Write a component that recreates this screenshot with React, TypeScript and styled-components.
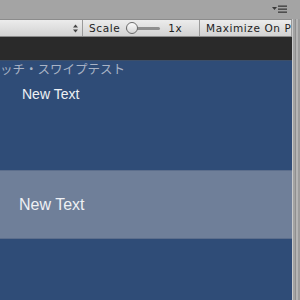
import React from "react";
import styled, { createGlobalStyle } from "styled-components";

const Global = createGlobalStyle`
  html, body { margin: 0; padding: 0; }
  body { width: 300px; height: 300px; overflow: hidden; background: #a3a3a3; }
`;

const Frame = styled.div`
  width: 300px;
  height: 300px;
  display: flex;
  flex-direction: column;
  overflow: hidden;
`;

const TabBar = styled.div`
  height: 19px;
  background: #a4a4a4;
  display: flex;
  justify-content: flex-end;
  align-items: flex-start;
  padding: 5px 12px 0 0;
  box-sizing: border-box;
`;

const Body = styled.div`
  flex: 1;
  display: flex;
  min-height: 0;
`;

const Main = styled.div`
  flex: 1;
  display: flex;
  flex-direction: column;
  min-width: 0;
`;

const Toolbar = styled.div`
  height: 18px;
  display: flex;
  align-items: stretch;
  background: linear-gradient(#ececec, #d2d2d2);
  border-top: 1px solid #8c8c8c;
  border-bottom: 1px solid #8a8a8a;
  box-sizing: border-box;
  font-family: "DejaVu Sans", sans-serif;
  font-size: 10.5px;
  color: #1e1e1e;
  white-space: nowrap;
  overflow: hidden;
`;

const Dropdown = styled.div`
  width: 83px;
  flex: none;
  display: flex;
  justify-content: flex-end;
  align-items: center;
  padding-right: 4px;
  box-sizing: border-box;
  border-right: 1px solid #9a9a9a;
`;

const Section = styled.div<{ $w?: number }>`
  display: flex;
  align-items: center;
  gap: 6px;
  padding-left: 6px;
  box-sizing: border-box;
  ${(p) => (p.$w ? `width: ${p.$w}px; flex: none;` : "flex: 1;")}
  border-right: 1px solid #9a9a9a;
  overflow: hidden;
  letter-spacing: 0.6px;
`;

const Slider = styled.div`
  position: relative;
  width: 34px;
  height: 12px;
  display: flex;
  align-items: center;
`;

const Track = styled.div`
  width: 100%;
  height: 3px;
  border-radius: 2px;
  background: #8e8e8e;
`;

const Knob = styled.div`
  position: absolute;
  left: 0;
  top: 0;
  width: 10px;
  height: 10px;
  border-radius: 50%;
  border: 1px solid #6c6c6c;
  background: linear-gradient(#fafafa, #d6d6d6);
`;

const Ratio = styled.span`
  margin-left: 2px;
`;

const DarkStrip = styled.div`
  height: 23px;
  background: #2a2a2a;
  border-bottom: 1px solid #3c4e68;
`;

const Game = styled.div`
  flex: 1;
  background: #2f4c77;
  display: flex;
  flex-direction: column;
  overflow: hidden;
`;

const Title = styled.div`
  font-family: "Noto Sans CJK JP", sans-serif;
  font-size: 12.5px;
  line-height: 15px;
  color: #a9b3c5;
  margin-left: -12.5px;
  white-space: nowrap;
`;

const Row = styled.div<{ $highlight?: boolean; $h: number; $pad?: number; $size?: number }>`
  height: ${(p) => p.$h}px;
  flex: none;
  box-sizing: border-box;
  display: flex;
  align-items: center;
  padding-left: ${(p) => p.$pad ?? 0}px;
  font-family: "Liberation Sans", Arial, sans-serif;
  font-size: ${(p) => p.$size ?? 14}px;
  color: #eef0f4;
  background: ${(p) => (p.$highlight ? "#6f7f99" : "transparent")};
  border-top: ${(p) => (p.$highlight ? "1px solid #5c6e8c" : "none")};
  border-bottom: ${(p) => (p.$highlight ? "1px solid #5c6e8c" : "none")};
`;

const Side = styled.div`
  width: 8px;
  flex: none;
  background: linear-gradient(90deg, #c9c9c9 0 1px, #a2a2a2 1px 3px, #8f8f8f 3px 4px, #b4b4b4 4px 6px, #9c9c9c 6px 8px);
`;

const MenuIcon = () => (
  <svg width="16" height="8" viewBox="0 0 16 8">
    <path d="M0 2 L5 2 L2.5 5 Z" fill="#3a3a3a" />
    <rect x="6" y="0.5" width="9" height="1.3" fill="#3a3a3a" />
    <rect x="6" y="3.5" width="9" height="1.3" fill="#3a3a3a" />
    <rect x="6" y="6.5" width="9" height="1.3" fill="#3a3a3a" />
  </svg>
);

const Arrows = () => (
  <svg width="5" height="9" viewBox="0 0 5 9">
    <path d="M0 3.5 L2.5 0.5 L5 3.5 Z" fill="#444" />
    <path d="M0 5.5 L2.5 8.5 L5 5.5 Z" fill="#444" />
  </svg>
);

export default function App() {
  return (
    <Frame>
      <Global />
      <TabBar>
        <MenuIcon />
      </TabBar>
      <Body>
        <Main>
          <Toolbar>
            <Dropdown>
              <Arrows />
            </Dropdown>
            <Section $w={117}>
              <span>Scale</span>
              <Slider>
                <Track />
                <Knob />
              </Slider>
              <Ratio>1x</Ratio>
            </Section>
            <Section>Maximize On Play</Section>
          </Toolbar>
          <DarkStrip />
          <Game>
            <Title>タッチ・スワイプテスト</Title>
            <Row $h={36} $pad={22} $size={14}>New Text</Row>
            <Row $h={58} />
            <Row $highlight $h={69} $pad={19} $size={16}>New Text</Row>
          </Game>
        </Main>
        <Side />
      </Body>
    </Frame>
  );
}
